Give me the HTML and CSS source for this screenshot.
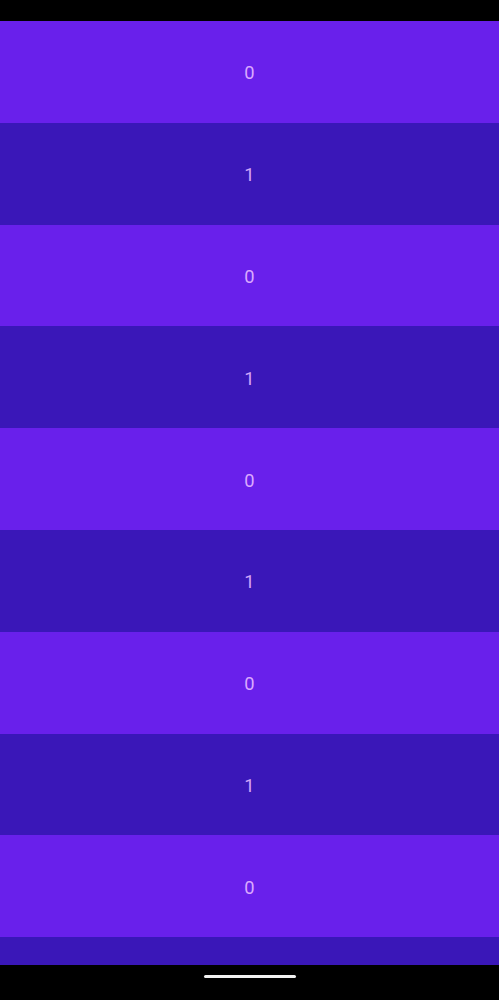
FILE: index.html
```html
<!DOCTYPE html>
<html>
<head>
<meta charset="utf-8">
<link rel="stylesheet" href="styles.css">
</head>
<body>
<div class="screen">
  <div class="status-bar"></div>
  <div class="list">
    <div class="row light">0</div>
    <div class="row dark">1</div>
    <div class="row light">0</div>
    <div class="row dark">1</div>
    <div class="row light">0</div>
    <div class="row dark">1</div>
    <div class="row light">0</div>
    <div class="row dark">1</div>
    <div class="row light">0</div>
    <div class="row dark"></div>
  </div>
  <div class="nav-bar"><div class="handle"></div></div>
</div>
</body>
</html>
```
FILE: styles.css
```css
html, body {
  margin: 0;
  padding: 0;
  background: #000;
}
.screen {
  width: 499px;
  height: 1000px;
  display: flex;
  flex-direction: column;
  overflow: hidden;
  font-family: Roboto, "Noto Sans", sans-serif;
}
.status-bar {
  height: 21px;
  flex: none;
  background: #000;
}
.list {
  flex: 1;
  overflow: hidden;
  display: flex;
  flex-direction: column;
}
.row {
  flex: none;
  height: 101.8px;
  box-sizing: border-box;
  padding-top: 2px;
  display: flex;
  align-items: center;
  justify-content: center;
  font-size: 18.3px;
  color: #dba9ff;
}
.row.light {
  background: #6920eb;
}
.row.dark {
  background: #3a17b8;
  color: #d0a4f8;
}
.nav-bar {
  height: 35px;
  flex: none;
  background: #000;
  display: flex;
  justify-content: center;
  padding-top: 10px;
  box-sizing: border-box;
}
.handle {
  width: 92px;
  height: 3px;
  border-radius: 2px;
  background: #f2f2f2;
}
```
